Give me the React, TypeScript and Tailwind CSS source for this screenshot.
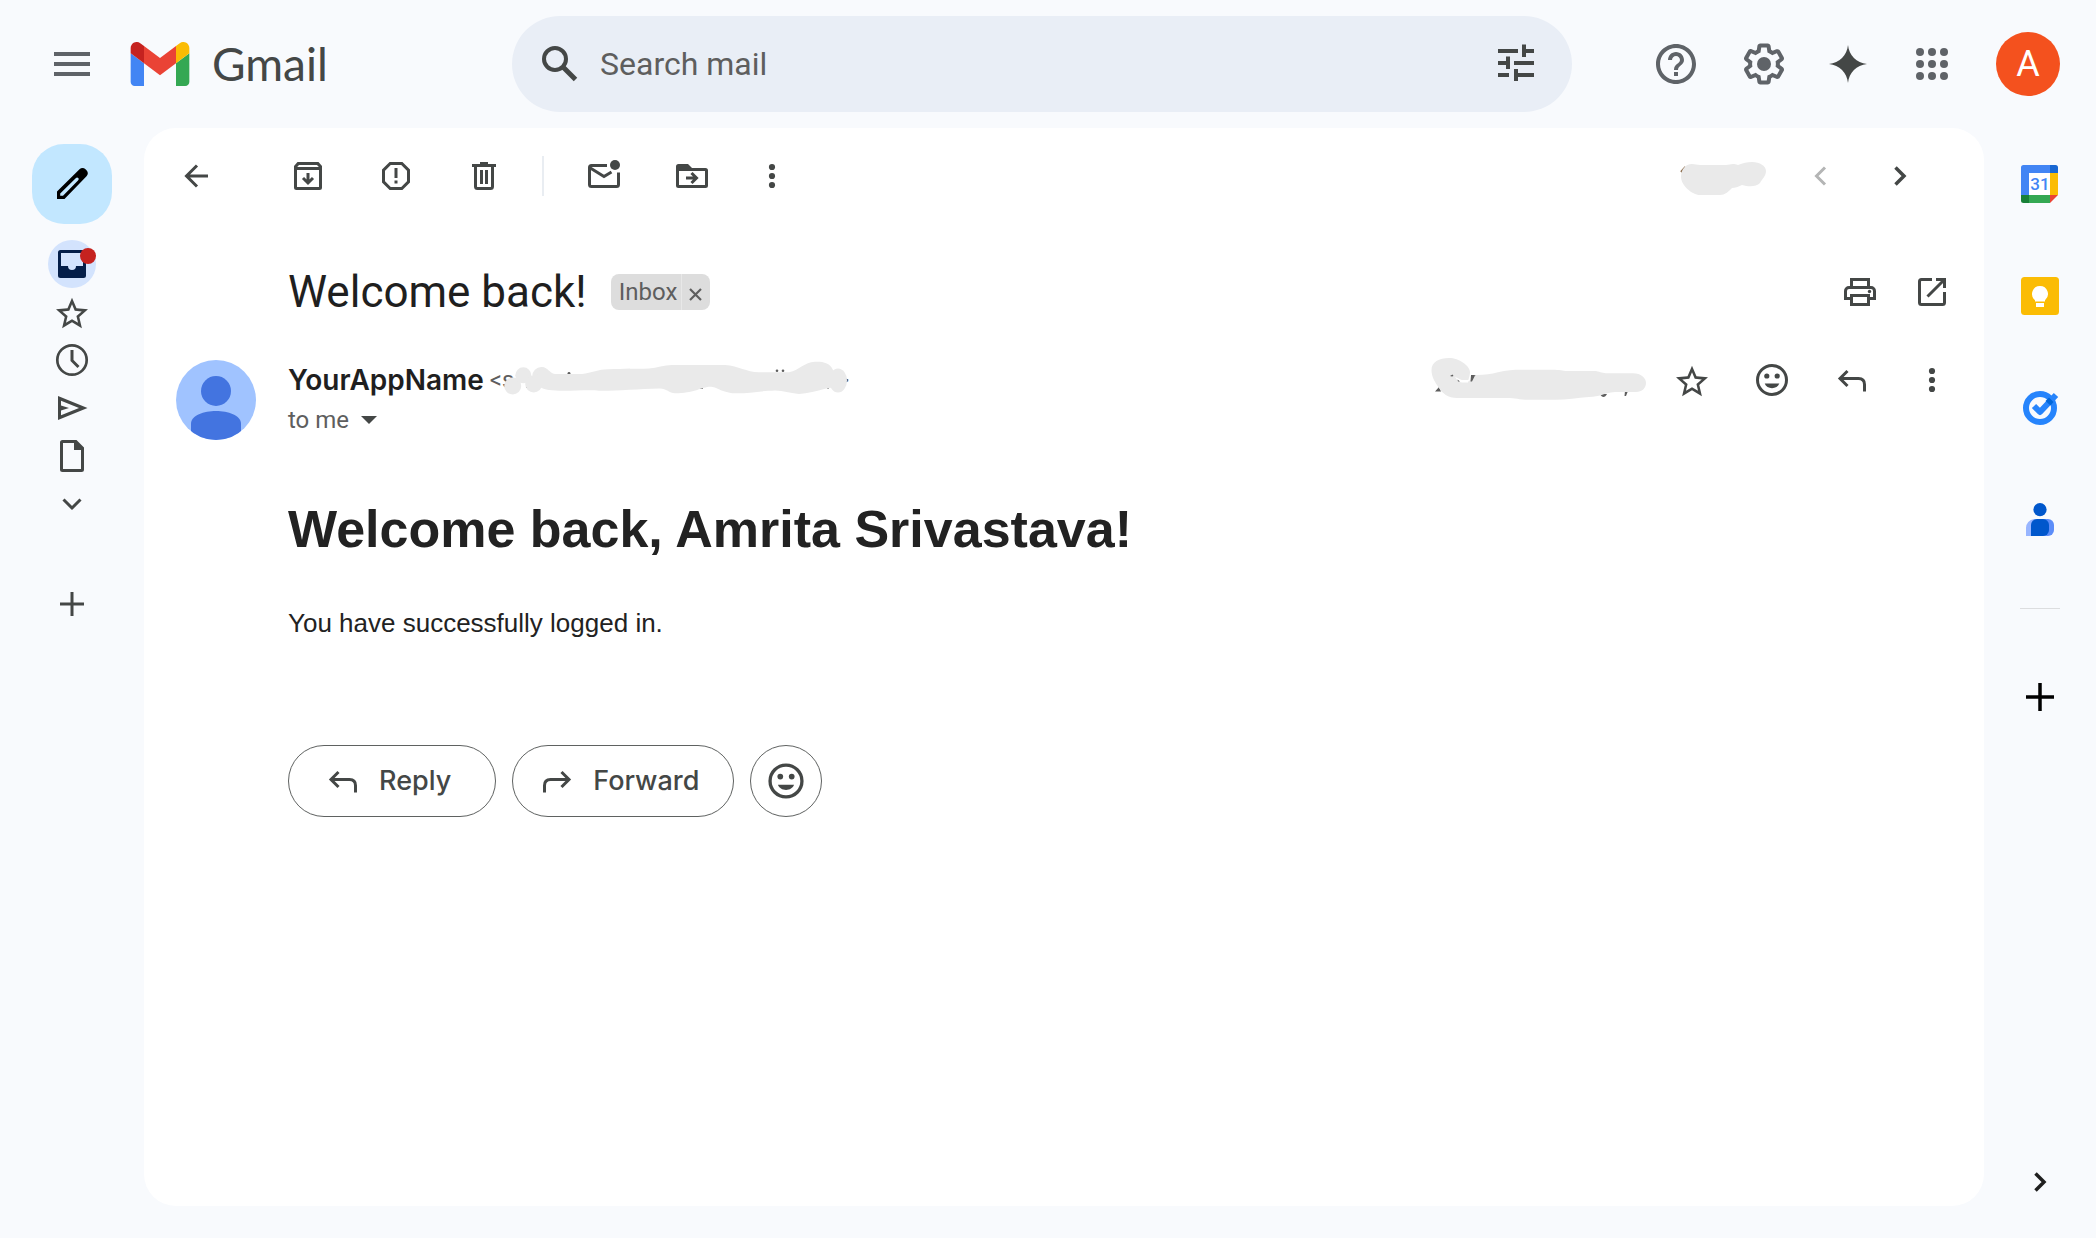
import type { ReactNode } from "react";

function Icon({ children, size = "size-10", box = "0 0 40 40" }: { children: ReactNode; size?: string; box?: string }) {
  return (
    <svg viewBox={box} className={`${size} shrink-0`} fill="currentColor" aria-hidden="true">
      {children}
    </svg>
  );
}

function IconButton({ label, children, className = "" }: { label: string; children: ReactNode; className?: string }) {
  return (
    <button type="button" aria-label={label} className={`flex shrink-0 items-center justify-center ${className}`}>
      {children}
    </button>
  );
}

const line = { fill: "none", stroke: "currentColor", strokeWidth: 3 };

const Menu = () => (
  <Icon size="size-12" box="0 0 48 48">
    <path d="M6 12h36v4H6zM6 22h36v4H6zM6 32h36v4H6z" />
  </Icon>
);
const Search = () => (
  <Icon>
    <g {...line} strokeWidth={4}>
      <circle cx="15" cy="15" r="11" />
      <path d="M22.5 22.5 35.5 35.5" strokeWidth={5} />
    </g>
  </Icon>
);
const Tune = () => (
  <Icon>
    <path d="M2 5h20v4H2zM26 .5h4V5h8v4h-8v4h-4zM10 12.500h4v12.500h-4v-4H2v-4h8zM18 17h20v4H18zM2 29h11v4H2zM18 25h4v4h16v4H22v4h-4z" />
  </Icon>
);
const Help = () => (
  <Icon size="size-12" box="0 0 24 24">
    <path d="M11 18h2v-2h-2v2zm1-16C6.480 2 2 6.480 2 12s4.480 10 10 10 10-4.480 10-10S17.520 2 12 2zm0 18c-4.410 0-8-3.590-8-8s3.590-8 8-8 8 3.590 8 8-3.590 8-8 8zm0-14c-2.210 0-4 1.790-4 4h2c0-1.100.9-2 2-2s2 .9 2 2c0 2-3 1.750-3 5h2c0-2.250 3-2.500 3-5 0-2.210-1.790-4-4-4z" />
  </Icon>
);
const Gear = () => (
  <Icon size="size-12" box="0 0 24 24">
    <path d="M13.85 22.25h-3.7c-.74 0-1.36-.54-1.45-1.27l-.27-1.89c-.27-.14-.53-.29-.79-.46l-1.8.72c-.7.26-1.47-.03-1.81-.65L2.2 15.53c-.35-.66-.2-1.44.36-1.88l1.53-1.19c-.01-.15-.02-.3-.02-.46 0-.15.01-.31.02-.46l-1.52-1.19c-.59-.45-.74-1.26-.37-1.88l1.85-3.19c.34-.62 1.11-.9 1.79-.63l1.81.73c.26-.17.52-.32.78-.46l.27-1.91c.09-.7.71-1.25 1.44-1.25h3.7c.74 0 1.36.54 1.45 1.27l.27 1.89c.27.14.53.29.79.46l1.8-.72c.71-.26 1.48.03 1.82.65l1.84 3.18c.36.66.2 1.44-.36 1.88l-1.52 1.19c.01.15.02.3.02.46s-.01.31-.02.46l1.52 1.19c.56.45.72 1.23.37 1.86l-1.86 3.22c-.34.62-1.11.9-1.8.63l-1.8-.72c-.26.17-.52.32-.78.46l-.27 1.91c-.1.68-.72 1.22-1.46 1.22zm-3.23-2h2.76l.37-2.55.53-.22c.44-.18.88-.44 1.34-.78l.45-.34 2.38.96 1.38-2.4-2.03-1.58.07-.56c.03-.26.06-.51.06-.78s-.03-.53-.06-.78l-.07-.56 2.03-1.58-1.39-2.4-2.39.96-.45-.35c-.42-.32-.87-.58-1.33-.77l-.52-.22-.37-2.55h-2.76l-.37 2.55-.53.21c-.44.19-.88.44-1.34.79l-.45.33-2.38-.95-1.39 2.39 2.03 1.58-.07.56a7 7 0 0 0-.06.79c0 .26.02.53.06.78l.07.56-2.03 1.58 1.38 2.4 2.39-.96.45.35c.43.33.86.58 1.33.77l.53.22.38 2.55z" />
    <circle cx="12" cy="12" r="3.500" />
  </Icon>
);
const Spark = () => (
  <Icon>
    <path d="M20 1C21 11.500 28.500 19 39 20 28.500 21 21 28.500 20 39 19 28.500 11.500 21 1 20 11.500 19 19 11.500 20 1z" />
  </Icon>
);
const Apps = () => (
  <Icon>
    {[8, 20, 32].map((y) => [8, 20, 32].map((x) => <circle key={`${x}-${y}`} cx={x} cy={y} r="4" />))}
  </Icon>
);
const GmailMark = () => (
  <svg viewBox="52 42 88 66" className="h-11 w-[60px] shrink-0" aria-hidden="true">
    <path fill="#4285f4" d="M58 108h14V74L52 59v43c0 3.320 2.690 6 6 6" />
    <path fill="#34a853" d="M120 108h14c3.320 0 6-2.690 6-6V59l-20 15" />
    <path fill="#fbbc04" d="M120 48v26l20-15v-8c0-7.420-8.470-11.650-14.400-7.200" />
    <path fill="#ea4335" d="M72 74V48l24 18 24-18v26L96 92" />
    <path fill="#c5221f" d="M52 51v8l20 15V48l-5.600-4.200c-5.940-4.450-14.400-.22-14.400 7.200" />
  </svg>
);
const Pencil = () => (
  <Icon>
    <path
      fillRule="evenodd"
      d="M5 35v-7.500L27.500 5.300c1.800-1.800 4.200-1.800 6 0l1 1c1.800 1.800 1.800 4.200 0 6L12.500 35zM8.200 31.800h2.800L26 16.500c1-1 .8-1.800.2-2.400s-1.500-.8-2.500.2L8.200 29.500z"
    />
  </Icon>
);
const Inbox = () => (
  <Icon>
    <path
      fillRule="evenodd"
      d="M8.500 6h23A2.500 2.500 0 0 1 34 8.500v23a2.500 2.500 0 0 1-2.500 2.500h-23A2.500 2.500 0 0 1 6 31.500v-23A2.500 2.500 0 0 1 8.500 6zM9 9v13h7a4 4 0 0 0 8 0h7V9z"
    />
  </Icon>
);
const Star = () => (
  <Icon size="size-10" box="-0.5 -1.6 25 25">
    <path d="M22 9.240l-7.190-.62L12 2 9.190 8.630 2 9.240l5.460 4.730L5.820 21 12 17.270 18.180 21l-1.630-7.030L22 9.240zM12 15.400l-3.760 2.270 1-4.280-3.320-2.880 4.380-.38L12 6.100l1.710 4.040 4.380.38-3.320 2.880 1 4.280L12 15.400z" />
  </Icon>
);
const Clock = () => (
  <Icon>
    <g {...line}>
      <circle cx="20" cy="20" r="14.700" strokeWidth={2.700} />
      <path d="M20 10v10.500l6.500 6.500" />
    </g>
  </Icon>
);
const Send = () => (
  <Icon>
    <path fillRule="evenodd" d="M6 8 35.500 20 6 32zM9 12.800v4.700l8 2.500-8 2.500v4.700L27 20z" />
  </Icon>
);
const Doc = () => (
  <Icon>
    <path
      fillRule="evenodd"
      d="M10.500 4h14L32 11.500v22a2.500 2.500 0 0 1-2.500 2.500h-19A2.500 2.500 0 0 1 8 33.500v-27A2.500 2.500 0 0 1 10.500 4zM11 7v26h18V14h-7V7z"
    />
  </Icon>
);
const ChevronDown = () => (
  <Icon>
    <path {...line} d="m11.500 15.500 8.500 8.500 8.500-8.500" />
  </Icon>
);
const Plus = ({ r = 12 }: { r?: number }) => (
  <Icon>
    <path {...line} strokeWidth={r > 12 ? 3.500 : 3} d={`M20 ${20 - r}v${2 * r}M${20 - r} 20h${2 * r}`} />
  </Icon>
);
const Back = () => (
  <Icon>
    <path {...line} d="M21 9.500 10.500 20 21 30.500M10.500 20H32" />
  </Icon>
);
const Archive = () => (
  <Icon>
    <path
      fillRule="evenodd"
      d="M9.500 6h21L34 10v21.500a2.500 2.500 0 0 1-2.500 2.500h-23A2.500 2.500 0 0 1 6 31.500V10zM11 9l-1.800 2h21.600L29 9zM9 14v17h22V14z"
    />
    <path {...line} d="M20 17v9M15 22l5 5 5-5" />
  </Icon>
);
const Spam = () => (
  <Icon>
    <path {...line} d="M14.200 7.500h11.600l6.700 6.700v11.600l-6.700 6.700H14.200l-6.700-6.700V14.200z" />
    <path d="M18.500 12h3v10h-3zM18.500 24.500h3v3h-3z" />
  </Icon>
);
const Trash = () => (
  <Icon>
    <path d="M16 6h8v2h8v3H8V8h8z" />
    <path {...line} d="M11.500 10v20.500a2 2 0 0 0 2 2h13a2 2 0 0 0 2-2V10" />
    <path d="M16 14h3v14h-3zM21 14h3v14h-3z" />
  </Icon>
);
const MailDot = () => (
  <Icon>
    <path {...line} d="M23 9.500H7.500a2 2 0 0 0-2 2v17a2 2 0 0 0 2 2h25a2 2 0 0 0 2-2V16.500" />
    <path {...line} d="M5.500 11.500 20 20.500l7.500-4.500" />
    <circle cx="31" cy="9" r="5" />
  </Icon>
);
const MoveTo = () => (
  <Icon>
    <path
      fillRule="evenodd"
      d="M6.500 8H16l4 4h13.500a2.500 2.500 0 0 1 2.500 2.500v15a2.500 2.500 0 0 1-2.500 2.500h-27A2.500 2.500 0 0 1 4 29.500v-19A2.500 2.500 0 0 1 6.500 8zM7 15v14h26V15z"
    />
    <path {...line} d="M14 22h10M19.500 17l5 5-5 5" />
  </Icon>
);
const Dots = () => (
  <Icon>
    <circle cx="20" cy="11" r="3.100" />
    <circle cx="20" cy="20" r="3.100" />
    <circle cx="20" cy="29" r="3.100" />
  </Icon>
);
const ChevronLeft = () => (
  <Icon>
    <path {...line} d="M25 11.500 16.500 20l8.500 8.500" />
  </Icon>
);
const ChevronRight = () => (
  <Icon>
    <path {...line} strokeWidth={3.500} d="m15.500 11.500 8.500 8.500-8.500 8.500" />
  </Icon>
);
const Print = () => (
  <Icon>
    <path {...line} d="M11.500 15V7.500h17V15" />
    <path {...line} d="M11 26.500H5.500V19a3.500 3.500 0 0 1 3.500-3.500h22a3.500 3.500 0 0 1 3.500 3.500v7.500H29" />
    <path {...line} d="M11.500 23.500h17v9h-17z" />
    <circle cx="29.500" cy="19.500" r="1.700" />
  </Icon>
);
const OpenNew = () => (
  <Icon>
    <path {...line} d="M20 7.500H9.500a2 2 0 0 0-2 2v21a2 2 0 0 0 2 2h21a2 2 0 0 0 2-2V20M24 7.500h8.500V16M32 8 15.500 24.500" />
  </Icon>
);
const Smile = ({ size = "size-10" }: { size?: string }) => (
  <Icon size={size}>
    <circle {...line} cx="20" cy="20" r="14.500" />
    <circle cx="14.800" cy="16" r="2.600" />
    <circle cx="25.200" cy="16" r="2.600" />
    <path d="M12.700 23.500h14.600c-1 2.900-4 4.700-7.300 4.700s-6.300-1.800-7.300-4.700z" />
  </Icon>
);
const Reply = () => (
  <Icon>
    <path {...line} d="M15.500 11 8 18.500l7.500 7.500M8 18.500h18.500c4 0 6 2.500 6 6v7" />
  </Icon>
);
const Forward = () => (
  <Icon>
    <path {...line} d="M24.500 11l7.500 7.500-7.500 7.500M32 18.500H13.500c-4 0-6 2.500-6 6v7" />
  </Icon>
);

const Calendar = () => (
  <Icon>
    <path fill="#4285f4" d="M3.500 1H30v8H9v22H1V3.500A2.500 2.500 0 0 1 3.500 1z" />
    <path fill="#1967d2" d="M30 1h5.500A2.500 2.500 0 0 1 38 3.500V9h-8z" />
    <path fill="#fbbc04" d="M30 9h8v22h-8z" />
    <path fill="#34a853" d="M9 31h21v8H9z" />
    <path fill="#188038" d="M1 31h8v8H3.500A2.500 2.500 0 0 1 1 36.500z" />
    <path fill="#ea4335" d="M30 31h8l-8 8z" />
    <path fill="#fff" d="M9 9h21v22H9z" />
    <text x="20" y="26" textAnchor="middle" fill="#4285f4" className="font-['Roboto',sans-serif] text-[17px] font-medium">
      31
    </text>
  </Icon>
);
const Keep = () => (
  <Icon>
    <rect x="1" y="1" width="38" height="38" rx="3.500" fill="#fbbc04" />
    <path fill="#fff" d="M20 10a8 8 0 0 0-5 14.200V25.500h10v-1.300A8 8 0 0 0 20 10zM16 27h8v4h-8z" />
  </Icon>
);
const Tasks = () => (
  <Icon>
    <circle cx="20" cy="20" r="14" fill="none" stroke="#2684fc" strokeWidth="6" />
    <path d="m14 18 6 6L36 7" fill="none" stroke="#2684fc" strokeWidth="6" strokeLinejoin="round" />
    <path d="m29 9.500 4.500 4.500-3 3.500-5-4.500z" fill="#0066da" />
  </Icon>
);
const Contacts = () => (
  <Icon>
    <path fill="#98b5ff" d="M14 19h10v17H6v-8a9 9 0 0 1 8-9z" />
    <path fill="#5c8df9" d="M22 19h6a6 6 0 0 1 6 6v5a6 6 0 0 1-6 6h-6z" />
    <path fill="#0057cc" d="M17 19h6a6 6 0 0 1 6 6v5a6 6 0 0 1-6 6H11V25a6 6 0 0 1 6-6z" />
    <circle cx="20" cy="9.700" r="6.600" fill="#0057cc" />
  </Icon>
);

/* Scribbles that hide private details. */
const CountMask = () => (
  <svg viewBox="0 -5 88 40" className="h-10 w-[88px] shrink-0" aria-hidden="true">
    <path d="M1 11 5.500 6" stroke="#8a6a4a" strokeWidth="2" />
    <path
      fill="#eaeaea"
      d="M1 16C1 9 5 3 12 3 15 3 17 4 20 4H46C50 4 52 2 58 4C63 2 67 1 72 1C80 1 86 5 86 10C86 15 82 18 80 22C76 26 69 26 62 24C58 26 55 27 52 27C48 31 45 34 40 34H20C12 34 1 24 1 16z"
    />
  </svg>
);
const AddressMask = () => (
  <svg viewBox="0 0 346 40" className="relative -ml-[10px] h-10 w-[346px] shrink-0" aria-hidden="true">
    <g fill="#5e5e5e">
      <circle cx="65" cy="13.300" r="1.400" />
      <circle cx="273" cy="10.800" r="1.300" />
      <circle cx="279" cy="10.800" r="1.300" />
      <path d="M189 27h10v1.800h-10zM323 25h2v3.500h-2zM22 24h2v4h-2z" />
    </g>
    <g fill="#eaeaea">
      <circle cx="8.700" cy="26" r="8.500" />
      <circle cx="19.300" cy="15.300" r="8" />
      <circle cx="29.700" cy="24" r="8.500" />
      <circle cx="37.300" cy="16" r="9" />
      <ellipse cx="334" cy="20.500" rx="9" ry="12" />
      <path d="M37 7C44 7 45 13 51 14H78C88 13 95 9 105 9.300C120 8.500 132 9 145 8.500C153 8 160 5 168 5H221C235 6 242 12 255 12.300H285C296 10 300 2 311 1.700C320 1.500 326 3 329 10L334 30C325 24 320 32 295 34C285 33 280 31 271 30.500C255 31 245 33.500 231 33.300C215 32 213 26 205 26.700C195 28 190 33 171 33.300C165 33 162 28 155 28.500C135 29 110 31 95 30.700C85 29 60 32 45 30C38 29 30 25 30 20z" />
    </g>
  </svg>
);
const DateMask = () => (
  <svg viewBox="0 -4 220 54" className="h-[54px] w-[220px] shrink-0" aria-hidden="true">
    <path fill="#5e5e5e" d="M5 34.500 9 30l2 4.500zM41 18h5l-3 8h-2zM170 37c2 4 5 4 7 0zM195 34l3 0-2 5h-1.500z" />
    <path
      fill="#eaeaea"
      d="M1.500 13C1.500 5 9 1 19 1C29 1 40 9 40 15C40 18 39 21 38 24C41 25 42 18 47 18C55 18 61 17 68 15.300C76 13 84 12.700 91 12.700H125C131 13 134 14 139 14H166C171 15 172 16.300 178 16.300H203C211 16.300 216 21 216 26C216 31 212 35 206 35H185C173 36 170 40 159 40C147 41 137 42.700 125 42.700H95C87 42 83 41 74.500 41H27C18 41 12 36 9 31C5 25 1.500 20 1.500 13z"
    />
    <path fill="#fff" d="M25 20c4 1 5 3 8 3l6 0-1 2.500h-6c-3 0-5-3-7-5.500z" />
    <path fill="#5e5e5e" d="M20 19l2.500-1.500 1 1.500-1.500.5zM27.500 22.500l2.500 2h-2zM41 18.500h4l-3 6h-1.500z" />
  </svg>
);

export default function App() {
  return (
    <div className="flex min-h-screen flex-col bg-[#f8fafd] font-['Roboto',sans-serif] text-[#444746]">
      <header className="flex h-32 items-center">
        <div className="flex w-[512px] shrink-0 items-center pl-12 text-[#5f6368]">
          <IconButton label="Main menu">
            <Menu />
          </IconButton>
          <a href="#inbox" className="ml-[34px] flex items-center gap-[22px] text-[#444746]">
            <GmailMark />
            <span className="font-['Lato',sans-serif] text-[46px] leading-[60px]">Gmail</span>
          </a>
        </div>
        <form role="search" className="flex h-24 flex-1 items-center rounded-full bg-[#e9eef6] pr-9 pl-7">
          <IconButton label="Search">
            <Search />
          </IconButton>
          <input
            type="text"
            aria-label="Search mail"
            placeholder="Search mail"
            className="ml-5 min-w-0 flex-1 bg-transparent text-[32px] outline-none placeholder:text-[#5e5e5e]"
          />
          <IconButton label="Show search options">
            <Tune />
          </IconButton>
        </form>
        <div className="flex items-center pr-9 pl-20 text-[#5f6368]">
          <IconButton label="Support">
            <Help />
          </IconButton>
          <IconButton label="Settings" className="ml-10">
            <Gear />
          </IconButton>
          <IconButton label="Ask Gemini" className="ml-10 text-[#444746]">
            <Spark />
          </IconButton>
          <IconButton label="Google apps" className="ml-11">
            <Apps />
          </IconButton>
          <IconButton label="Account" className="ml-11 size-16 rounded-full bg-[#f4511e] text-[36px] text-white">
            A
          </IconButton>
        </div>
      </header>

      <div className="flex flex-1">
        <nav aria-label="Mail folders" className="flex w-36 shrink-0 flex-col items-center pt-4">
          <IconButton label="Compose" className="size-20 rounded-[32px] bg-[#c2e7ff] text-black">
            <Pencil />
          </IconButton>
          <IconButton label="Inbox" className="relative mt-4 size-12 rounded-full bg-[#d3e3fd] text-[#041e49]">
            <Inbox />
            <span className="absolute top-2 right-0 size-4 rounded-full bg-[#c5221f]" />
          </IconButton>
          <IconButton label="Starred" className="size-12">
            <Star />
          </IconButton>
          <IconButton label="Snoozed" className="size-12">
            <Clock />
          </IconButton>
          <IconButton label="Sent" className="size-12">
            <Send />
          </IconButton>
          <IconButton label="Drafts" className="size-12">
            <Doc />
          </IconButton>
          <IconButton label="More" className="size-12">
            <ChevronDown />
          </IconButton>
          <IconButton label="Create new label" className="mt-14">
            <Plus />
          </IconButton>
        </nav>

        <main className="mb-8 flex min-w-0 flex-1 flex-col rounded-[32px] bg-white">
          <div className="flex h-24 items-center pr-16 pl-8">
            <IconButton label="Back to Inbox">
              <Back />
            </IconButton>
            <div className="ml-[72px] flex items-center gap-12">
              <IconButton label="Archive">
                <Archive />
              </IconButton>
              <IconButton label="Report spam">
                <Spam />
              </IconButton>
              <IconButton label="Delete">
                <Trash />
              </IconButton>
            </div>
            <div className="ml-[38px] h-10 w-0.5 bg-[#e9edf2]" />
            <div className="ml-10 flex items-center gap-12">
              <IconButton label="Mark as unread">
                <MailDot />
              </IconButton>
              <IconButton label="Move to">
                <MoveTo />
              </IconButton>
            </div>
            <IconButton label="More email options" className="ml-10">
              <Dots />
            </IconButton>
            <div className="ml-auto flex items-center">
              <CountMask />
              <IconButton label="Newer" className="ml-8 text-[#b4b5b5]">
                <ChevronLeft />
              </IconButton>
              <IconButton label="Older" className="ml-10">
                <ChevronRight />
              </IconButton>
            </div>
          </div>

          <div className="mt-8 flex h-[72px] items-center pr-8 pl-36">
            <h2 className="text-[44px] leading-[60px] text-[#1f1f1f]">Welcome back!</h2>
            <div className="ml-6 flex h-9 items-center rounded-lg bg-[#ddd] text-[24px] text-[#5e5e5e]">
              <button type="button" className="h-9 border-r border-[#e8e8e8] pr-1 pl-2 leading-9">
                Inbox
              </button>
              <IconButton label="Remove label Inbox" className="w-7">
                <svg viewBox="0 0 28 36" className="h-9 w-7" aria-hidden="true">
                  <path d="m8 15 11 11M19 15 8 26" stroke="#5e5e5e" strokeWidth="2.200" />
                </svg>
              </IconButton>
            </div>
            <div className="ml-auto flex gap-8">
              <IconButton label="Print all">
                <Print />
              </IconButton>
              <IconButton label="In new window">
                <OpenNew />
              </IconButton>
            </div>
          </div>

          <article className="mt-8 flex gap-8 pr-8 pl-8">
            <svg viewBox="0 0 80 80" className="size-20 shrink-0 rounded-full bg-[#a0c3ff]" role="img" aria-label="Sender photo">
              <g fill="#4374e0">
                <circle cx="40" cy="31" r="15" />
                <path d="M15 80V64c0-9 13-13 25-13s25 4 25 13v16z" />
              </g>
            </svg>
            <div className="min-w-0 flex-1">
              <div className="flex h-10 items-center">
                <h3 className="font-['Inter',sans-serif] text-[28px] font-semibold text-[#1f1f1f]">YourAppName</h3>
                <span className="ml-1.5 flex items-center text-[24px] text-[#5e5e5e]">
                  &lt;s
                  <AddressMask />
                  <span className="-ml-[14px]">&gt;</span>
                </span>
                <div className="ml-auto flex items-center">
                  <DateMask />
                  <IconButton label="Not starred" className="ml-[22px]">
                    <Star />
                  </IconButton>
                  <IconButton label="Add reaction" className="ml-10">
                    <Smile />
                  </IconButton>
                  <IconButton label="Reply" className="ml-10">
                    <Reply />
                  </IconButton>
                  <IconButton label="More message options" className="ml-10">
                    <Dots />
                  </IconButton>
                </div>
              </div>
              <button type="button" aria-label="Show details" className="flex h-10 items-center text-[24px] text-[#5e5e5e]">
                to me
                <svg viewBox="0 0 16 8" className="ml-3 h-2 w-4" aria-hidden="true">
                  <path d="M0 0h16L8 8z" fill="#444746" />
                </svg>
              </button>
              <h1 className="mt-[59px] font-['Liberation_Sans',Arial,sans-serif] text-[52px] leading-[60px] font-bold text-[#222]">
                Welcome back, Amrita Srivastava!
              </h1>
              <p className="mt-12 font-['Liberation_Sans',Arial,sans-serif] text-[26px] leading-[32px] text-[#222]">
                You have successfully logged in.
              </p>
              <div className="mt-[106px] flex gap-4 font-['Inter',sans-serif] text-[27px] font-medium">
                <button type="button" className="flex h-[72px] items-center gap-4 rounded-full border border-[#5f6261] pr-11 pl-[34px]">
                  <Reply />
                  Reply
                </button>
                <button type="button" className="flex h-[72px] items-center gap-4 rounded-full border border-[#5f6261] pr-[34px] pl-6">
                  <Forward />
                  Forward
                </button>
                <IconButton label="Add reaction" className="size-[72px] rounded-full border border-[#5f6261]">
                  <Smile size="size-11" />
                </IconButton>
              </div>
            </div>
          </article>
        </main>

        <aside aria-label="Side panel" className="flex w-28 shrink-0 flex-col items-center pt-9">
          <div className="flex flex-col gap-[72px]">
            <IconButton label="Calendar">
              <Calendar />
            </IconButton>
            <IconButton label="Keep">
              <Keep />
            </IconButton>
            <IconButton label="Tasks">
              <Tasks />
            </IconButton>
            <IconButton label="Contacts">
              <Contacts />
            </IconButton>
          </div>
          <div className="mt-[68px] h-px w-10 bg-[#dcdddf]" />
          <IconButton label="Get add-ons" className="mt-[68px] text-black">
            <Plus r={14} />
          </IconButton>
          <IconButton label="Hide side panel" className="mt-auto mb-9 text-[#1f1f1f]">
            <ChevronRight />
          </IconButton>
        </aside>
      </div>
    </div>
  );
}
